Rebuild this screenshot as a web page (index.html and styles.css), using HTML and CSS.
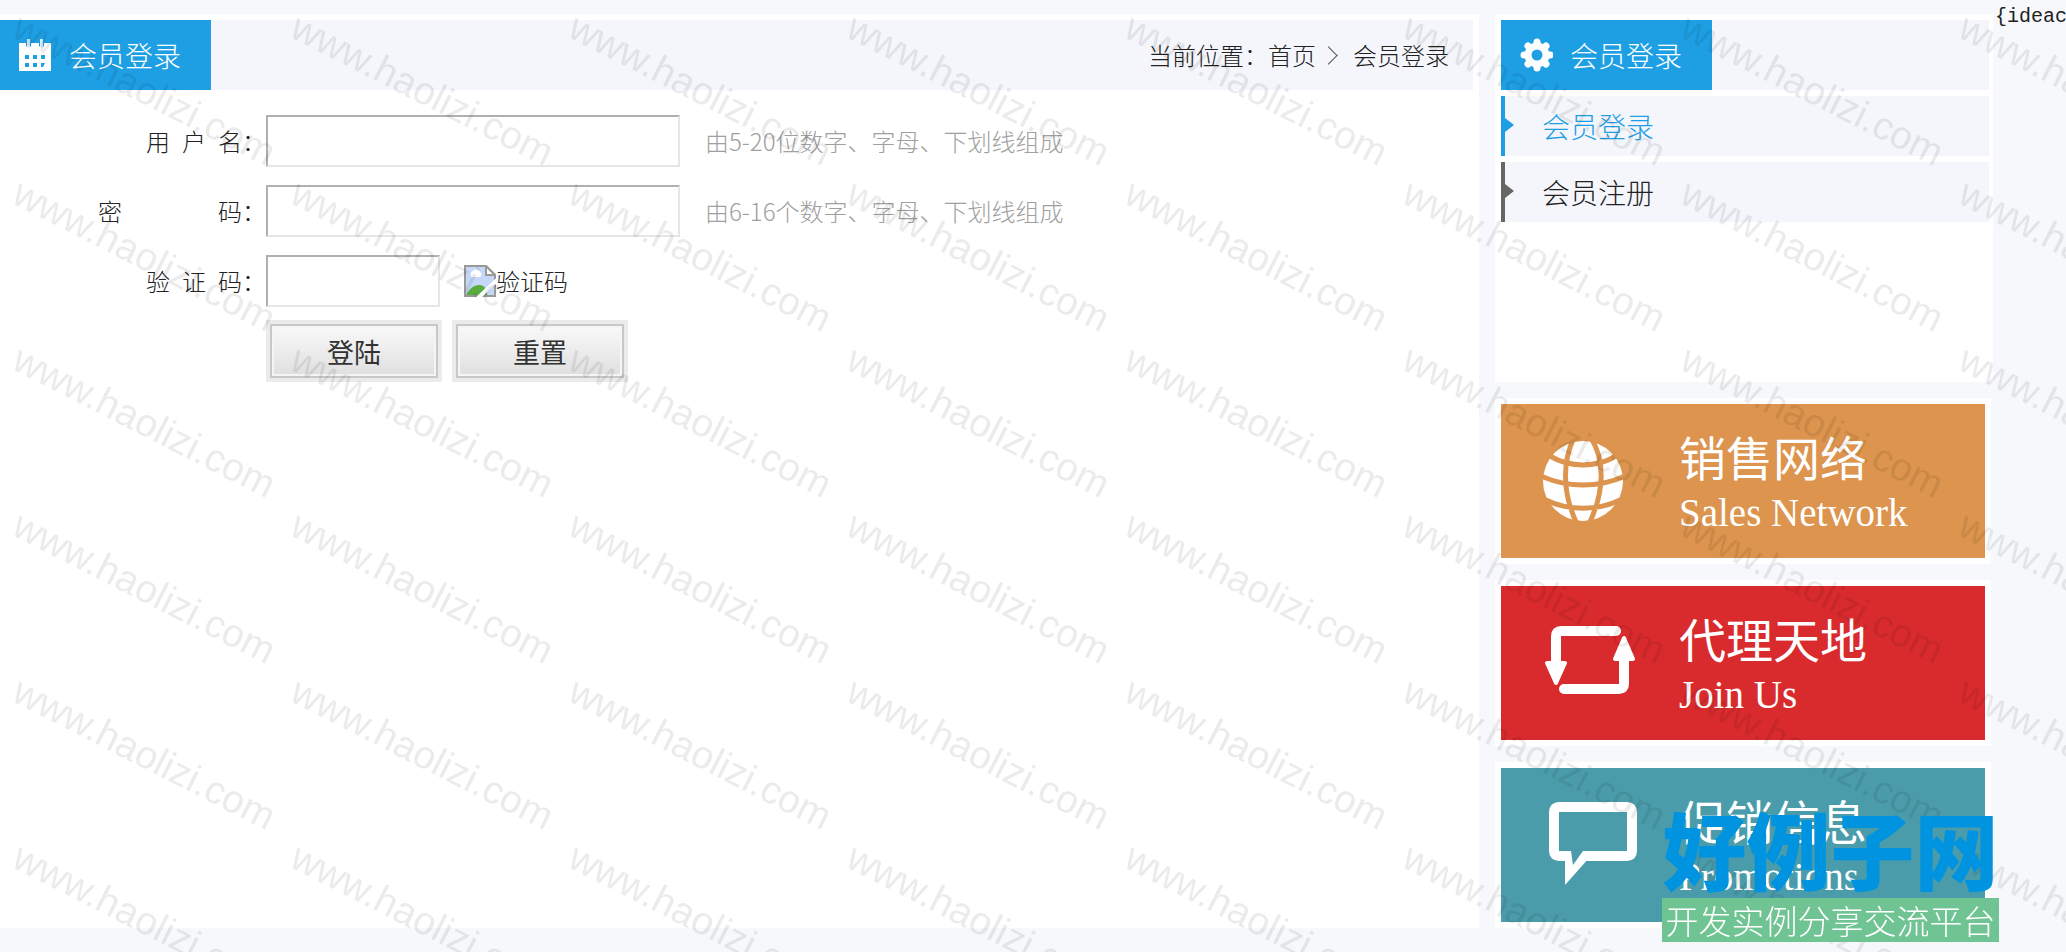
FILE: index.html
```html
<!doctype html>
<html lang="zh-cn">
	<head>
		<meta charset="UTF-8">
		<title>会员登录</title>
		<link rel="stylesheet" href="styles.css">
	</head>
	<body>
		<div class="wrap">
			<div class="main">
				<div class="title">
					<h2>
						<svg class="ico" viewBox="0 0 34 34"><path fill="#fff" d="M1 5h7v3a3 3 0 0 0 5 0V5h8v3a3 3 0 0 0 5 0V5h7v28H1z"/><path fill="#d8effb" d="M9 1h3v8H9zM22 1h3v8h-3z"/><path fill="#1e9fe4" d="M7 17h4v4H7zM15 17h4v4h-4zM23 17h4v4h-4zM7 25h4v4H7zM15 25h4v4h-4zM23 25h4l-2 4h-2z"/></svg>
						会员登录
					</h2>
					<p class="path">当前位置：<a href="#">首页</a><i></i><a href="#">会员登录</a></p>
				</div>
				<form class="login">
					<div class="row">
						<label for="user">用&ensp;户&ensp;名：</label>
						<input type="text" id="user">
						<span class="tip">由5-20位数字、字母、下划线组成</span>
					</div>
					<div class="row">
						<label for="pass" class="wide"><span>密</span><span>码：</span></label>
						<input type="password" id="pass">
						<span class="tip">由6-16个数字、字母、下划线组成</span>
					</div>
					<div class="row">
						<label for="code">验&ensp;证&ensp;码：</label>
						<input type="text" id="code" class="short">
						<span class="code">
							<svg viewBox="0 0 32 32"><path fill="#c5d8f7" d="M1 1h21l9 9v21H1z"/><path fill="#fff" d="M7 10a3 3 0 0 1 2-4 4 4 0 0 1 7 1 3 3 0 0 1 0 5H7z"/><path fill="#5bac3f" d="M2 30c3-6 8-10 13-10 4 0 6 2 8 5v5z"/><path fill="none" stroke="#999" stroke-width="2" d="M1 1h21l9 9v21H1z"/><path fill="#fff" stroke="#999" stroke-width="2" d="M22 1v9h9z"/><path stroke="#fff" stroke-width="4" d="M14 33L33 15"/></svg>验证码
						</span>
					</div>
					<div class="btns">
						<button type="submit">登陆</button>
						<button type="reset">重置</button>
					</div>
				</form>
			</div>
			<div class="side">
				<div class="menu">
					<div class="title">
						<h2>
							<svg class="ico" viewBox="0 0 34 34"><circle cx="18" cy="17" r="9" fill="none" stroke="#fff" stroke-width="7"/><path stroke="#fff" stroke-width="7" stroke-linecap="round" d="M18 4v3M18 27v3M5 17h3M28 17h3M9 8l2 2M25 24l2 2M27 8l-2 2M11 24l-2 2"/></svg>
							会员登录
						</h2>
					</div>
					<ul>
						<li class="on"><a href="#">会员登录</a></li>
						<li><a href="#">会员注册</a></li>
					</ul>
				</div>
				<a href="#" class="card orange">
					<svg viewBox="0 0 96 90"><circle cx="40" cy="45" r="40" fill="#fff"/><g fill="none" stroke="#dc944e" stroke-width="5"><path d="M31 2C20 24 18 56 35 90M48 2C62 24 62 56 45 90M7 20c20 12 46 12 66 0M-2 40c26 12 58 12 84 0M3 64c22 11 52 11 74 0"/></g></svg>
					<span><b>销售网络</b><em>Sales Network</em></span>
				</a>
				<a href="#" class="card red">
					<svg viewBox="0 0 96 90"><path fill="none" stroke="#fff" stroke-width="10" stroke-linecap="round" stroke-linejoin="round" d="M73 13H18q-5 0-5 5v32M21 71h55q5 0 5-5V36"/><path fill="#fff" stroke="#fff" stroke-width="4" stroke-linejoin="round" d="M4 45h18l-9 20zM72 41h18l-9-21z"/></svg>
					<span><b>代理天地</b><em>Join Us</em></span>
				</a>
				<a href="#" class="card teal">
					<svg viewBox="0 0 96 90"><path fill="none" stroke="#fff" stroke-width="10" d="M16 7h68q5 0 5 5v39q0 5-5 5H16q-5 0-5-5V12q0-5 5-5z"/><path fill="#fff" d="M22 58v27l24-27z"/><path fill="#4b9cab" d="M28 51h12L30 65z"/></svg>
					<span><b>促销信息</b><em>Promotions</em></span>
				</a>
			</div>
			<div class="extra">{ideacms</div>
		</div>
		<svg class="mark">
			<defs>
				<pattern id="mark" width="278" height="166" patternUnits="userSpaceOnUse">
					<text transform="translate(10 36) rotate(27)">www.haolizi.com</text>
				</pattern>
			</defs>
			<rect width="100%" height="100%" fill="url(#mark)"/>
		</svg>
		<div class="logo">
			<strong>好例子网</strong>
			<span>开发实例分享交流平台</span>
		</div>
	</body>
</html>
```
FILE: styles.css
```css
html,body,div,h2,p,ul,li,form {
	margin: 0;
	padding: 0;
	box-sizing: border-box;
}
ul {
	list-style: none;
}
a {
	color: inherit;
	text-decoration: none;
}
body {
	background: #f7f8fc;
	color: #222;
	font: 300 24px/34px "Noto Sans CJK SC", sans-serif;
	overflow: hidden;
}
.wrap {
	display: flex;
	align-items: flex-start;
	min-height: 100vh;
}
.main {
	flex: 1;
	align-self: stretch;
	margin: 14px 16px 24px 0;
	padding: 6px 6px 0 0;
	background: #fff;
}
.title {
	display: flex;
	justify-content: space-between;
	background: #f5f6fb;
}
.title h2 {
	display: flex;
	align-items: center;
	height: 70px;
	padding: 0 30px 0 18px;
	background: #1e9fe4;
	color: #fff;
	font-size: 28px;
	font-weight: 300;
}
.ico {
	width: 34px;
	height: 34px;
	margin-right: 17px;
}
.path {
	display: flex;
	align-items: center;
	padding-right: 24px;
}
.path i {
	width: 12px;
	height: 12px;
	margin: 0 18px 0 6px;
	border: solid #555;
	border-width: 1px 1px 0 0;
	transform: rotate(45deg);
}
.login {
	padding-top: 25px;
}
.row {
	display: flex;
	align-items: center;
	height: 52px;
	margin-bottom: 18px;
}
.row label {
	width: 266px;
	text-align: right;
	white-space: nowrap;
}
.row .wide {
	display: flex;
	justify-content: space-between;
	padding-left: 98px;
	box-sizing: border-box;
}
.row input {
	width: 414px;
	height: 52px;
	box-sizing: border-box;
	border: 2px solid;
	border-color: #b0b0b0 #e6e6e6 #e6e6e6 #b0b0b0;
	background: #fff;
	font-size: 24px;
}
.row .short {
	width: 174px;
}
.tip {
	margin-left: 25px;
	color: #a0a0a0;
}
.code {
	display: flex;
	align-items: center;
	margin-left: 24px;
}
.code svg {
	width: 32px;
	height: 32px;
}
.btns {
	display: flex;
	gap: 10px;
	margin-top: -5px;
	padding-left: 266px;
}
.btns button {
	width: 176px;
	height: 62px;
	border: 4px solid #ebebeb;
	background: linear-gradient(#fafafa, #dedede);
	box-shadow: inset 0 0 0 2px #c8c8c8, inset 0 0 0 4px #f5f5f5;
	color: #333;
	font: 400 27px "Noto Sans CJK SC", sans-serif;
}
.side {
	width: 498px;
}
.menu {
	height: 368px;
	margin: 14px 0 16px;
	padding: 6px 4px 0 6px;
	background: #fff;
}
.menu li {
	position: relative;
	height: 60px;
	margin-top: 6px;
	padding-left: 37px;
	border-left: 4px solid #666;
	background: #f5f6fb;
	font-size: 28px;
	line-height: 60px;
}
.menu li:before {
	content: "";
	position: absolute;
	left: 0;
	top: 22px;
	border: 7px solid transparent;
	border-left: 9px solid #666;
}
.menu .on {
	border-color: #1e9fe4;
	color: #1e9fe4;
}
.menu .on:before {
	border-left-color: #1e9fe4;
}
.card {
	display: flex;
	align-items: center;
	width: 496px;
	height: 166px;
	margin-bottom: 16px;
	padding-left: 42px;
	box-sizing: border-box;
	border: 6px solid #fff;
	color: #fff;
}
.card:last-child {
	margin-bottom: 0;
}
.card svg {
	width: 96px;
	height: 90px;
	margin-right: 40px;
}
.card span {
	padding-top: 4px;
}
.card b {
	display: block;
	font-size: 47px;
	font-weight: 400;
	line-height: 56px;
}
.card em {
	display: block;
	padding-top: 4px;
	font: 39px/50px "Liberation Serif", serif;
}
.orange {
	background: #dc944e;
}
.red {
	background: #d92b2e;
}
.teal {
	background: #4b9cab;
}
.extra {
	width: 73px;
	padding-left: 2px;
	box-sizing: border-box;
	overflow: hidden;
	font-family: "Liberation Mono", monospace;
	font-size: 20px;
}
.mark {
	position: fixed;
	left: 0;
	top: 0;
	width: 100%;
	height: 100%;
	pointer-events: none;
}
.mark text {
	fill: #000;
	fill-opacity: .08;
	font: 39px "Liberation Sans", sans-serif;
}
.logo {
	position: fixed;
	right: 67px;
	bottom: 10px;
	width: 337px;
	text-align: center;
	white-space: nowrap;
}
.logo strong {
	display: block;
	padding-bottom: 5px;
	color: #0094e0;
	font-size: 84px;
	font-weight: 900;
	line-height: 90px;
}
.logo span {
	display: block;
	background: #70c392;
	color: #fff;
	font-size: 33px;
	line-height: 44px;
}
```
